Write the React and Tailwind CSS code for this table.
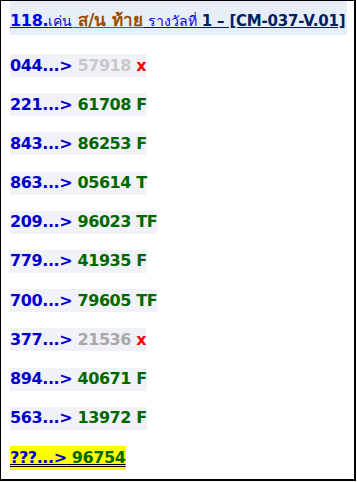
const rows = [
  { q: "044", n: "57918", r: "x", miss: true, gray: "text-[#c8c8c8]" },
  { q: "221", n: "61708", r: "F" },
  { q: "843", n: "86253", r: "F" },
  { q: "863", n: "05614", r: "T" },
  { q: "209", n: "96023", r: "TF" },
  { q: "779", n: "41935", r: "F" },
  { q: "700", n: "79605", r: "TF" },
  { q: "377", n: "21536", r: "x", miss: true, gray: "text-[#a8a8a8]" },
  { q: "894", n: "40671", r: "F" },
  { q: "563", n: "13972", r: "F" },
];

const App = () => {
  return (
    <div className="w-[357px] h-[482px] bg-white">
      <div className="w-[356px] h-[481px] border-t border-l border-r-2 border-b-2 border-black font-['DejaVu_Sans',sans-serif]">
        <div className="ml-[9px] w-[337px] h-[34px] bg-[#e8eef8] flex items-end pb-[6px]">
          <div className="text-[15px] leading-none whitespace-nowrap">
            <span className="text-[#0000ee] underline font-bold text-[16px] tracking-[-0.3px]">118.</span>
            <span className="text-[#0000ee] underline text-[14px]">เค่น</span>
            <span className="text-[#994c00] underline font-bold text-[17px]"> ส/น ท้าย</span>
            <span className="text-[#0000ee] underline text-[14px]"> รางวัลที่</span>
            <span className="text-[#002060] underline font-bold tracking-[-0.2px]"> 1 – [CM-037-V.01]</span>
          </div>
        </div>
        <div className="flex flex-col gap-[16.2px] mt-[19px] ml-[9px]">
          {rows.map((row) => (
            <div key={row.q} className="flex">
              <div className="bg-[#f0f2f8] h-[23px] flex items-center text-[16px] tracking-[-0.4px] font-bold leading-none whitespace-nowrap">
                <span className="text-[#0000cc]">{row.q}...&gt;</span>
                <span className={row.miss ? row.gray : "text-[#006600]"}>&nbsp;{row.n}</span>
                <span className={row.miss ? "text-[#ff0000]" : "text-[#006600]"}>&nbsp;{row.r}</span>
              </div>
            </div>
          ))}
          <div className="flex">
            <div className="bg-[#ffff00] h-[24px] flex items-center text-[16px] tracking-[-0.4px] font-bold leading-none whitespace-nowrap underline decoration-double">
              <span className="text-[#0000cc]">???...&gt;</span>
              <span className="text-[#006600]">&nbsp;96754</span>
            </div>
          </div>
        </div>
      </div>
    </div>
  );
};

export default App;
